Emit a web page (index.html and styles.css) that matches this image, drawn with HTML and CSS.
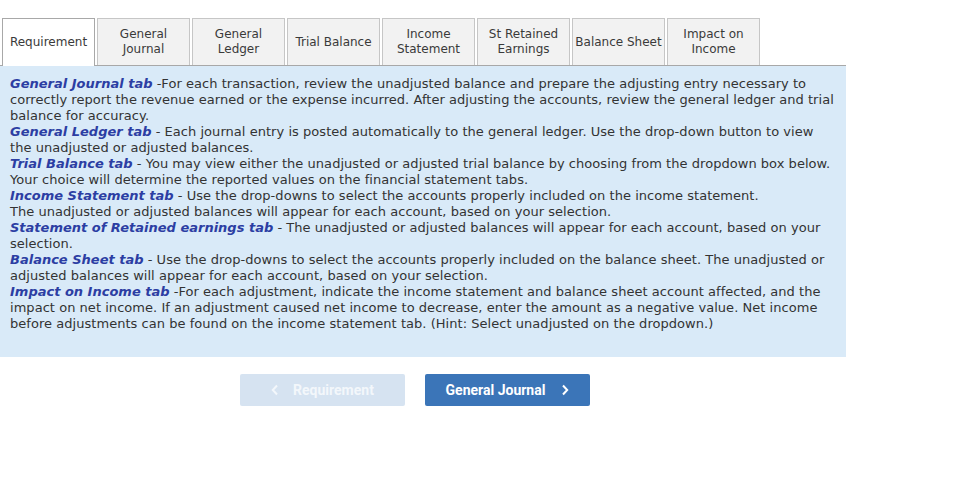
FILE: index.html
```html
<!DOCTYPE html>
<html>
<head>
<meta charset="utf-8">
<link rel="stylesheet" href="styles.css">
</head>
<body>
<div class="page">
  <div class="tabs">
    <div class="tab active">Requirement</div>
    <div class="tab">General<br>Journal</div>
    <div class="tab">General<br>Ledger</div>
    <div class="tab">Trial Balance</div>
    <div class="tab">Income<br>Statement</div>
    <div class="tab">St Retained<br>Earnings</div>
    <div class="tab">Balance Sheet</div>
    <div class="tab">Impact on<br>Income</div>
  </div>
  <div class="panel">
    <p><b>General Journal tab</b> -For each transaction, review the unadjusted balance and prepare the adjusting entry necessary to correctly report the revenue earned or the expense incurred. After adjusting the accounts, review the general ledger and trial balance for accuracy.<br>
    <b>General Ledger tab</b> - Each journal entry is posted automatically to the general ledger. Use the drop-down button to view the unadjusted or adjusted balances.<br>
    <b>Trial Balance tab</b> - You may view either the unadjusted or adjusted trial balance by choosing from the dropdown box below. Your choice will determine the reported values on the financial statement tabs.<br>
    <b>Income Statement tab</b> - Use the drop-downs to select the accounts properly included on the income statement.<br>
    The unadjusted or adjusted balances will appear for each account, based on your selection.<br>
    <b>Statement of Retained earnings tab</b> - The unadjusted or adjusted balances will appear for each account, based on your selection.<br>
    <b>Balance Sheet tab</b> - Use the drop-downs to select the accounts properly included on the balance sheet. The unadjusted or adjusted balances will appear for each account, based on your selection.<br>
    <b>Impact on Income tab</b> -For each adjustment, indicate the income statement and balance sheet account affected, and the impact on net income. If an adjustment caused net income to decrease, enter the amount as a negative value. Net income before adjustments can be found on the income statement tab. (Hint: Select unadjusted on the dropdown.)</p>
  </div>
  <div class="nav">
    <button class="btn prev"><svg class="chev" width="8" height="12" viewBox="0 0 8 12"><path d="M6 1.5 L1.8 6 L6 10.5" fill="none" stroke="currentColor" stroke-width="2"/></svg>Requirement</button>
    <button class="btn next">General Journal<svg class="chev" width="8" height="12" viewBox="0 0 8 12"><path d="M2 1.5 L6.2 6 L2 10.5" fill="none" stroke="currentColor" stroke-width="2"/></svg></button>
  </div>
</div>
</body>
</html>
```
FILE: styles.css
```css
html, body {
  margin: 0;
  padding: 0;
  background: #fff;
}
.page {
  width: 971px;
}
.tabs {
  display: flex;
  margin-top: 18px;
  padding-left: 2px;
  gap: 2px;
  width: 844px;
  border-bottom: 1px solid #a8a8a8;
  height: 47px;
}
.tab {
  box-sizing: border-box;
  width: 93px;
  height: 47px;
  border: 1px solid #c6c6c6;
  border-bottom: none;
  background: #f2f2f2;
  color: #3a3a3a;
  font-family: "DejaVu Sans", Verdana, sans-serif;
  font-size: 12px;
  line-height: 15px;
  display: flex;
  align-items: center;
  justify-content: center;
  text-align: center;
}
.tab.active {
  background: #fff;
  border-color: #a8a8a8;
  height: 48px;
  margin-bottom: -1px;
}
.panel {
  width: 846px;
  box-sizing: border-box;
  background: #d9eaf8;
  padding: 10px 8px 25px 10px;
  font-family: "DejaVu Sans", Verdana, sans-serif;
  font-size: 13px;
  line-height: 16px;
  letter-spacing: 0.04px;
  color: #333;
}
.panel p {
  margin: 0;
}
.panel b {
  font-style: italic;
  font-weight: bold;
  letter-spacing: 0;
  color: #2c3ea3;
}
.nav {
  width: 830px;
  display: flex;
  justify-content: center;
  gap: 20px;
  margin-top: 17px;
}
.btn {
  width: 165px;
  height: 32px;
  border: none;
  border-radius: 2px;
  font-family: Roboto, "Liberation Sans", sans-serif;
  font-weight: bold;
  font-size: 14px;
  display: flex;
  align-items: center;
  justify-content: center;
  gap: 14px;
  padding: 0;
}
.btn.prev {
  background: #d6e3f1;
  color: #f3f7fb;
}
.btn.next {
  background: #3b75b8;
  color: #fff;
  gap: 16px;
}
.chev {
  display: block;
}
```
